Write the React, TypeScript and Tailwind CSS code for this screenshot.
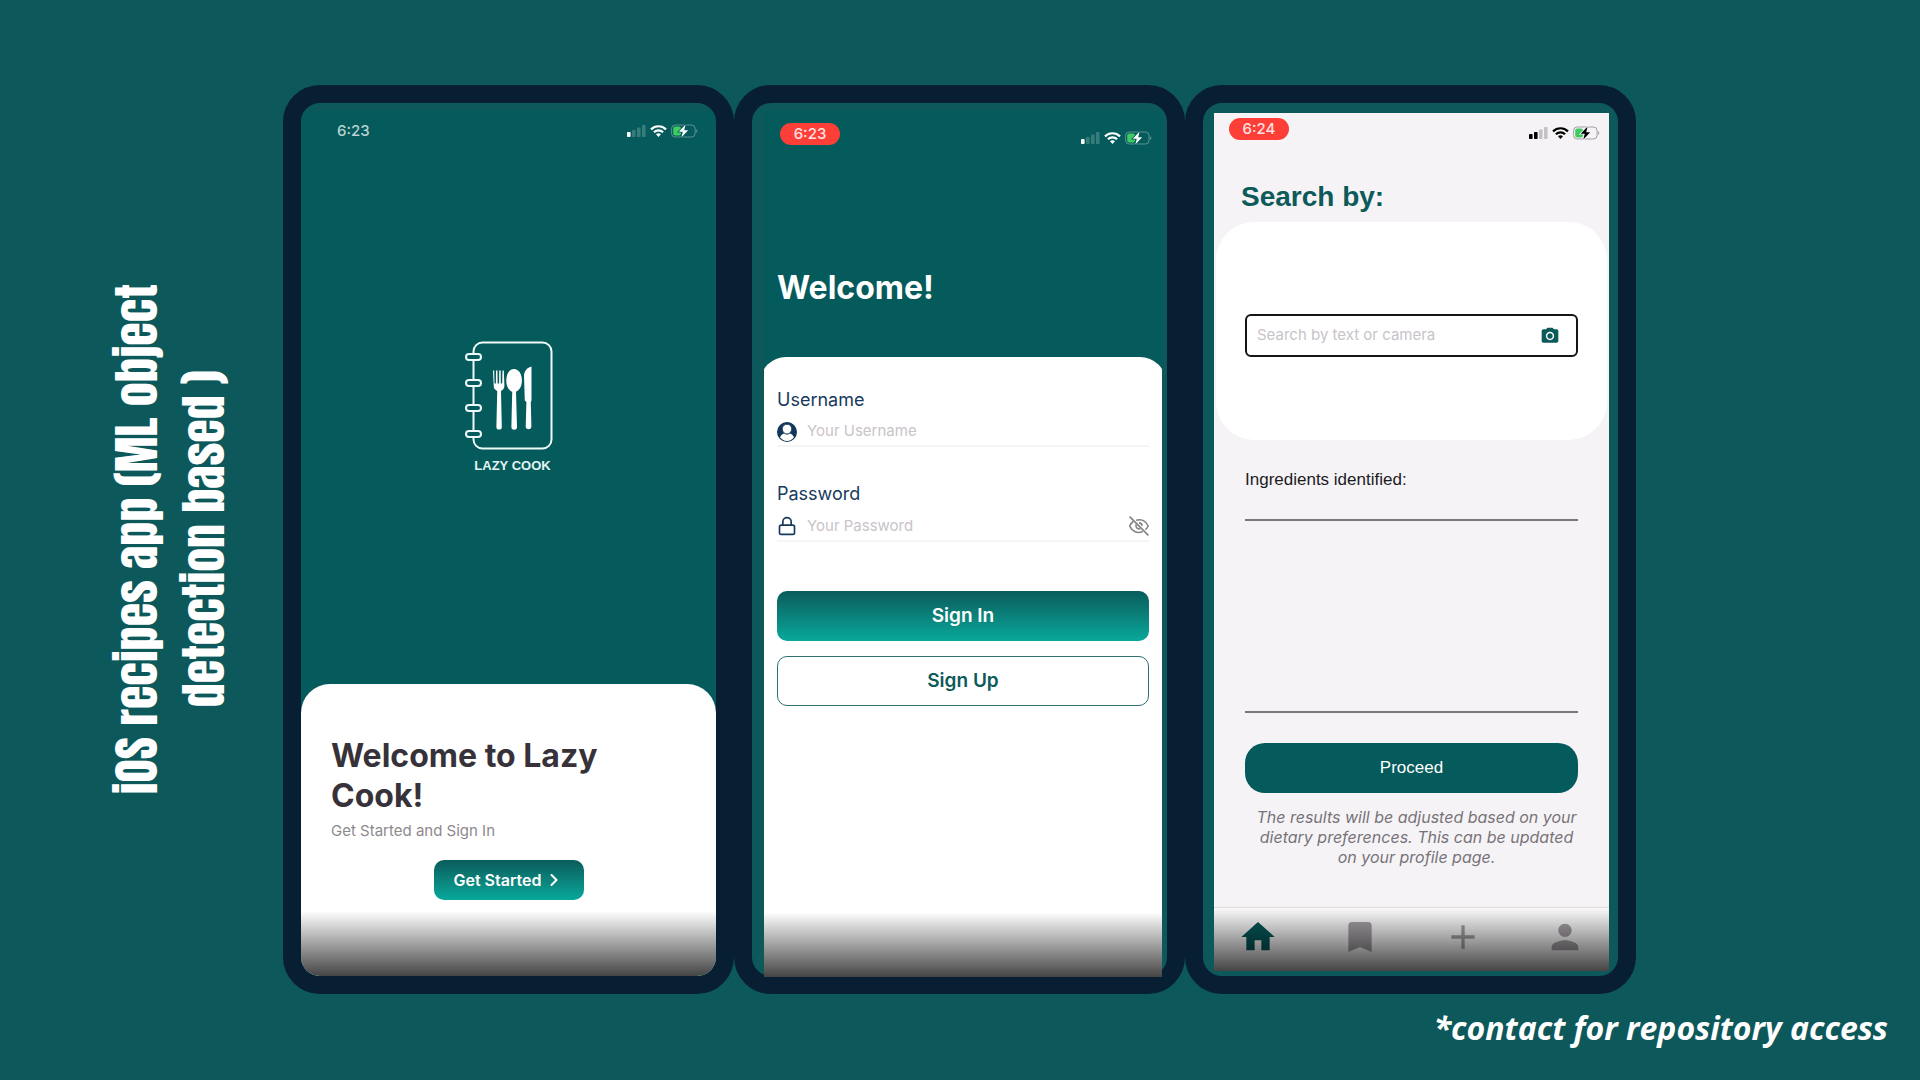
import type { ReactNode } from "react";
import { ChevronRight, Lock } from "lucide-react";
import { MdAdd, MdBookmark, MdCameraAlt, MdHome, MdPerson } from "react-icons/md";

function Signal({ bars }: { bars: number }) {
  return (
    <svg width="19" height="12" viewBox="0 0 19 12" fill="currentColor" aria-hidden="true">
      {[0, 1, 2, 3].map((i) => (
        <rect
          key={i}
          x={i * 5}
          y={[7, 5, 2.5, 0][i]}
          width="3.6"
          height={[5, 7, 9.5, 12][i]}
          rx="0.8"
          opacity={i < bars ? 1 : 0.2}
        />
      ))}
    </svg>
  );
}

function Wifi() {
  return (
    <svg width="17" height="12" viewBox="0 0 17 12" fill="none" stroke="currentColor" strokeWidth="2.2" aria-hidden="true">
      <path d="M1 4.4C5.2.2 11.8.2 16 4.4" />
      <path d="M3.9 7.3c2.6-2.5 6.6-2.5 9.2 0" />
      <path d="M8.5 12l-2.5-2.7c1.4-1.3 3.6-1.3 5 0z" fill="currentColor" stroke="none" />
    </svg>
  );
}

function Battery({ halo }: { halo: string }) {
  return (
    <svg width="27" height="14" viewBox="0 0 27 14" aria-hidden="true">
      <rect x="0.6" y="1" width="23.5" height="12" rx="3.6" fill="none" stroke="currentColor" strokeOpacity="0.35" />
      <path d="M25.3 5.2c1.4.5 1.4 3.1 0 3.6z" fill="currentColor" opacity="0.4" />
      <rect x="2.2" y="2.5" width="7.8" height="9" rx="2" fill="#3ecb5f" />
      <path
        d="M14.6.4L7.8 7.7h4L10.3 13.6 17.2 6.2h-4z"
        fill="currentColor"
        stroke={halo}
        strokeWidth="1.6"
        paintOrder="stroke"
      />
    </svg>
  );
}

function StatusIcons({ bars, halo }: { bars: number; halo: string }) {
  return (
    <div className="flex items-center gap-1">
      <Signal bars={bars} />
      <Wifi />
      <Battery halo={halo} />
    </div>
  );
}

function RecordingTime({ children }: { children: ReactNode }) {
  return (
    <span className="flex h-[22px] w-15 items-center justify-center rounded-full bg-[#fd3f38] text-[15px] font-medium text-red-100">
      {children}
    </span>
  );
}

function CookbookLogo() {
  return (
    <svg width="88" height="109" viewBox="0 0 88 109" fill="none" stroke="#effafa" strokeWidth="2" aria-hidden="true">
      <rect x="8.5" y="1.5" width="78" height="106" rx="9" />
      {[16, 42, 67, 93].map((y) => (
        <rect key={y} x="1" y={y - 3} width="15" height="6" rx="3" fill="#055a5b" />
      ))}
      <g fill="#ffffff" stroke="none">
        <path d="M28 29.5h1.2l.3 13h1.4l.1-13h1.5l.1 13h1.5l.1-13h1.5l.1 13h1.4l.3-13h1.3l.6 15c.1 2.7-1.4 4.6-3.4 5.4l.8 36a2.7 2.7 0 0 1-5.4 0l.8-36c-2.2-.8-3.7-2.7-3.5-5.4z" />
        <path d="M49 28c4.8 0 7.9 5 7.9 11.5 0 6-2.4 9.7-5.9 11.2l1 35.2a2.8 2.8 0 0 1-5.6 0l.8-35.2c-3.5-1.5-5.9-5.2-5.9-11.2C41.3 33 44.3 28 49 28z" />
        <path d="M66.5 25.5v34l-.7 1.5.6 24.9a2.9 2.9 0 0 1-5.7 0l.7-24.9-1.6-1.5L59 35c0-5 3.4-8.6 7.5-9.5z" />
      </g>
    </svg>
  );
}

function UserBadge() {
  return (
    <svg width="20" height="20" viewBox="0 0 20 20" aria-hidden="true">
      <circle cx="10" cy="10" r="10" fill="#12365c" />
      <path
        d="M3 15.3c.8-2.2 2.4-3.5 4.1-3.9 1.7 1.3 4.1 1.3 5.8 0 1.7.4 3.3 1.7 4.1 3.9-1.7 2.3-4.2 3.7-7 3.7s-5.3-1.4-7-3.7z"
        fill="#fff"
      />
      <path
        d="M10 2.3c2.8 0 4.7 2 4.7 4.6 0 2.9-2.1 5-4.7 5s-4.7-2.1-4.7-5c0-2.6 1.900-4.600 4.700-4.600z"
        fill="#fff"
        stroke="#12365c"
        strokeWidth="0.8"
      />
    </svg>
  );
}

function EyeOff() {
  return (
    <svg width="20" height="20" viewBox="0 0 20 20" fill="none" stroke="#858186" strokeWidth="1.6" aria-hidden="true">
      <path d="M.6.6l18.8 18.8" />
      <path d="M7.2 4.3C12.5 2.6 17 5.5 19.2 10c-.7 1.4-1.6 2.7-2.8 3.7" />
      <path d="M4.3 5.5C2.7 6.6 1.5 8.2.7 10c2.6 5.4 7.7 8 13 5.5" />
      <path d="M7.3 8.3c-1.3 2.6.9 5.4 3.9 4.3" />
      <path d="M10 6.900c1.700 0 3 1.300 3.100 3" />
    </svg>
  );
}

function Shade() {
  return (
    <div className="pointer-events-none absolute inset-x-0 bottom-0 h-[65px] bg-linear-to-b from-black/0 to-black/73" />
  );
}

function Phone({ children, clip = true }: { children: ReactNode; clip?: boolean }) {
  return (
    <section
      className={`flex min-h-[909px] flex-col rounded-[37px] border-[18px] border-[#081f33] ${clip ? "overflow-hidden" : ""}`}
    >
      {children}
    </section>
  );
}

function StartScreen() {
  return (
    <Phone>
      <div className="relative mt-2 flex grow flex-col bg-[#055a5b]">
        <header className="flex items-center justify-between pt-[9px] pr-[18px] pl-9 text-white">
          <span className="text-[15px] font-medium text-[#b9d3d2]">6:23</span>
          <StatusIcons bars={1} halo="#055a5b" />
        </header>
        <div className="flex grow flex-col items-center justify-center gap-2 pb-3">
          <CookbookLogo />
          <p className="pl-2 font-['Liberation_Sans',sans-serif] text-[13px] leading-4 font-bold text-[#e4f3f3]">
            LAZY COOK
          </p>
        </div>
        <div className="h-[292px] rounded-t-[29px] bg-white px-[30px] pt-[52px]">
          <h2 className="text-[32px] leading-10 font-bold text-[#37323a]">
            Welcome to Lazy
            <br />
            Cook!
          </h2>
          <p className="mt-[3px] text-[15px] leading-6 text-[#8d898e]">Get Started and Sign In</p>
          <button
            type="button"
            className="mx-auto mt-[17px] flex h-10 w-[150px] items-center justify-center gap-0.5 rounded-[10px] bg-linear-to-b from-[#0a5c5b] to-[#08a99b] text-base font-semibold text-white"
          >
            Get Started
            <ChevronRight size={20} strokeWidth={2.5} />
          </button>
        </div>
        <Shade />
      </div>
    </Phone>
  );
}

function SignInScreen() {
  return (
    <Phone clip={false}>
      <div className="relative mt-2 mr-[5px] -mb-px ml-3 flex grow flex-col overflow-hidden bg-[#055a5b]">
        <header className="flex items-end justify-between pt-3 pr-2.5 pl-4 text-white">
          <RecordingTime>6:23</RecordingTime>
          <StatusIcons bars={1} halo="#055a5b" />
        </header>
        <h2 className="mt-[123px] px-[13px] text-[32px] leading-10 font-bold text-white">Welcome!</h2>
        <form className="-mx-1 mt-[49px] grow rounded-t-[26px] bg-white px-[17px] pt-[31px] text-[#173a5c]">
          <label htmlFor="username" className="block text-lg leading-6">
            Username
          </label>
          <div className="flex h-[35px] items-center gap-2.5 border-b-2 border-[#f5f4f6] pt-1.5">
            <UserBadge />
            <input
              id="username"
              type="text"
              placeholder="Your Username"
              className="min-w-0 grow text-[15px] outline-none placeholder:text-[#c9c3ca]"
            />
          </div>
          <label htmlFor="password" className="mt-[35px] block text-lg leading-6">
            Password
          </label>
          <div className="flex h-9 items-center gap-2.5 border-b-2 border-[#f5f4f6] pt-1.5">
            <Lock size={20} strokeWidth={2} />
            <input
              id="password"
              type="password"
              placeholder="Your Password"
              className="min-w-0 grow text-[15px] outline-none placeholder:text-[#c9c3ca]"
            />
            <button type="button" aria-label="Show password">
              <EyeOff />
            </button>
          </div>
          <button
            type="button"
            className="mt-[49px] h-[50px] w-full rounded-[10px] bg-linear-to-b from-[#0a5c5b] to-[#08a99b] text-[19px] font-semibold text-white"
          >
            Sign In
          </button>
          <button
            type="button"
            className="mt-[15px] h-[50px] w-full rounded-[10px] border border-[#2f7070] text-[19px] font-semibold text-[#0d5a5a]"
          >
            Sign Up
          </button>
        </form>
        <Shade />
      </div>
    </Phone>
  );
}

function SearchScreen() {
  return (
    <Phone>
      <div className="relative mt-2.5 mr-[9px] mb-[5px] ml-[11px] flex grow flex-col bg-[#f6f3f7]">
        <header className="flex items-end justify-between pt-[5px] pr-[9px] pl-[15px] text-black">
          <RecordingTime>6:24</RecordingTime>
          <StatusIcons bars={2} halo="#f6f3f7" />
        </header>
        <h2 className="mt-[41px] px-[27px] font-['Liberation_Sans',sans-serif] text-[28px] leading-8 font-bold text-[#0d5a5a]">
          Search by:
        </h2>
        <div className="mx-0.5 mt-[9px] rounded-[38px] bg-white px-[29px] pt-[92px] pb-[83px]">
          <div className="flex h-[43px] items-center rounded-md border-2 border-[#151515] pr-4 pl-2.5">
            <input
              type="search"
              aria-label="Search"
              placeholder="Search by text or camera"
              className="min-w-0 grow text-[15px] outline-none placeholder:text-[#c9c3ca]"
            />
            <button type="button" aria-label="Use camera" className="text-[#0d5a5a]">
              <MdCameraAlt size={20} />
            </button>
          </div>
        </div>
        <div className="mx-[31px] flex grow flex-col font-['Liberation_Sans',sans-serif] text-[17px]">
          <h3 className="mt-7 leading-6 text-[#1b1b1d]">Ingredients identified:</h3>
          <div className="mt-[27px] h-[194px] border-y-2 border-[#7a777b]" />
          <button type="button" className="mt-[30px] h-[50px] rounded-[20px] bg-[#055a5b] text-white">
            Proceed
          </button>
          <p className="mt-3.5 -mr-1 ml-1.5 text-center font-[Inter,sans-serif] text-base leading-5 text-[#777378] italic">
            The results will be adjusted based on your
            <br />
            dietary preferences. This can be updated
            <br />
            on your profile page.
          </p>
        </div>
        <nav className="flex h-16 items-start justify-between border-t border-[#e6dfe4] bg-white px-6 pt-[9px] text-[#a8a3a9]">
          <a href="#home" aria-label="Home" className="text-[#055a5b]">
            <MdHome size={40} />
          </a>
          <a href="#saved" aria-label="Saved">
            <MdBookmark size={40} />
          </a>
          <a href="#add" aria-label="Add">
            <MdAdd size={40} />
          </a>
          <a href="#profile" aria-label="Profile">
            <MdPerson size={40} />
          </a>
        </nav>
        <Shade />
      </div>
    </Phone>
  );
}

export default function App() {
  return (
    <div className="min-h-screen bg-[#0d585a] pt-[85px] font-[Inter,sans-serif]">
      <main className="grid grid-cols-[283fr_1353fr_284fr] items-center">
        <h1 className="mr-[45px] rotate-180 justify-self-end text-center font-[Anton,sans-serif] text-5xl leading-[67px] font-normal text-white [writing-mode:vertical-rl]">
          iOS recipes app (ML object
          <br />
          detection based )
        </h1>
        <div className="grid grid-cols-3">
          <StartScreen />
          <SignInScreen />
          <SearchScreen />
        </div>
      </main>
      <footer className="mt-3 pr-8 text-right font-['Open_Sans',sans-serif] text-[32px] leading-11 font-bold text-white italic">
        *contact for repository access
      </footer>
    </div>
  );
}
